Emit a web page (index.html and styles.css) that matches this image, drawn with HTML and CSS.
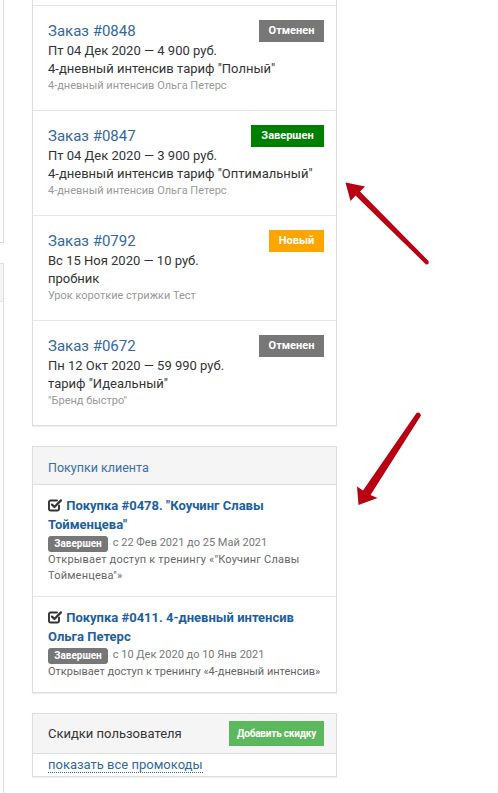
FILE: index.html
```html
<!DOCTYPE html>
<html lang="ru">
<head>
<meta charset="utf-8">
<title>Заказы клиента</title>
<link rel="stylesheet" href="styles.css">
</head>
<body>
<div class="page">
  <aside class="side">
    <div class="side-box side-box-top"></div>
    <div class="side-box side-box-bottom">
      <div class="side-head"></div>
    </div>
  </aside>

  <main class="main">
    <section class="panel orders">
      <div class="order-stub"></div>

      <div class="order">
        <div class="order-head">
          <a class="order-title">Заказ #0848</a>
          <span class="status status-cancel">Отменен</span>
        </div>
        <div class="order-line">Пт 04 Дек 2020 — 4 900 руб.</div>
        <div class="order-line">4-дневный интенсив тариф "Полный"</div>
        <div class="order-note">4-дневный интенсив Ольга Петерс</div>
      </div>

      <div class="order">
        <div class="order-head">
          <a class="order-title">Заказ #0847</a>
          <span class="status status-done">Завершен</span>
        </div>
        <div class="order-line">Пт 04 Дек 2020 — 3 900 руб.</div>
        <div class="order-line">4-дневный интенсив тариф "Оптимальный"</div>
        <div class="order-note">4-дневный интенсив Ольга Петерс</div>
      </div>

      <div class="order">
        <div class="order-head">
          <a class="order-title">Заказ #0792</a>
          <span class="status status-new">Новый</span>
        </div>
        <div class="order-line">Вс 15 Ноя 2020 — 10 руб.</div>
        <div class="order-line">пробник</div>
        <div class="order-note">Урок короткие стрижки Тест</div>
      </div>

      <div class="order order-last">
        <div class="order-head">
          <a class="order-title">Заказ #0672</a>
          <span class="status status-cancel">Отменен</span>
        </div>
        <div class="order-line">Пн 12 Окт 2020 — 59 990 руб.</div>
        <div class="order-line">тариф "Идеальный"</div>
        <div class="order-note">"Бренд быстро"</div>
      </div>
    </section>

    <section class="panel purchases">
      <div class="panel-head"><span class="panel-head-link">Покупки клиента</span></div>

      <div class="purchase">
        <div class="purchase-title">
          <svg class="check-ico" viewBox="0 0 14 14" width="14" height="14" aria-hidden="true">
            <path d="M11 7.5V11a1.5 1.5 0 0 1-1.5 1.5h-7A1.5 1.5 0 0 1 1 11V4a1.5 1.5 0 0 1 1.5-1.5H9" fill="none" stroke="#333" stroke-width="1.9" stroke-linecap="round"/>
            <path d="M4 6.6l2.4 2.4L13 2.4" fill="none" stroke="#333" stroke-width="2.2" stroke-linecap="round" stroke-linejoin="round"/>
          </svg>
          <a class="purchase-link">Покупка #0478. "Коучинг Славы<br>Тойменцева"</a>
        </div>
        <div class="purchase-meta"><span class="pill">Завершен</span> с 22 Фев 2021 до 25 Май 2021</div>
        <div class="purchase-desc">Открывает доступ к тренингу «"Коучинг Славы<br>Тойменцева"»</div>
      </div>

      <div class="purchase purchase-last">
        <div class="purchase-title">
          <svg class="check-ico" viewBox="0 0 14 14" width="14" height="14" aria-hidden="true">
            <path d="M11 7.5V11a1.5 1.5 0 0 1-1.5 1.5h-7A1.5 1.5 0 0 1 1 11V4a1.5 1.5 0 0 1 1.5-1.5H9" fill="none" stroke="#333" stroke-width="1.9" stroke-linecap="round"/>
            <path d="M4 6.6l2.4 2.4L13 2.4" fill="none" stroke="#333" stroke-width="2.2" stroke-linecap="round" stroke-linejoin="round"/>
          </svg>
          <a class="purchase-link">Покупка #0411. 4-дневный интенсив<br>Ольга Петерс</a>
        </div>
        <div class="purchase-meta"><span class="pill">Завершен</span> с 10 Дек 2020 до 10 Янв 2021</div>
        <div class="purchase-desc nowrap">Открывает доступ к тренингу «4-дневный интенсив»</div>
      </div>
    </section>

    <section class="panel discounts">
      <div class="panel-head discounts-head">
        <span class="discounts-title">Скидки пользователя</span>
        <button class="btn-add" type="button">Добавить скидку</button>
      </div>
      <div class="discounts-body">
        <a class="dotted-link">показать все промокоды</a>
      </div>
    </section>
  </main>
</div>

<svg class="arrows" width="498" height="793" viewBox="0 0 498 793" aria-hidden="true">
  <path d="M345.5,182.5 L365,186.5 L360,191.5 L428.5,261 Q429.5,264.5 426,264.5 L355.5,195.5 L350.5,201 Z" fill="#b80012"/>
  <path d="M358.5,505 L357,486.5 L363,490.5 L416.5,413 Q420,411.5 421,415.5 L370.5,495 L377.5,498 Z" fill="#b80012"/>
</svg>
</body>
</html>
```

FILE: styles.css
```css
* { box-sizing: border-box; }

html, body {
  margin: 0;
  padding: 0;
  background: #fff;
}

body {
  font-family: Roboto, "Liberation Sans", Arial, sans-serif;
  color: #333;
  width: 498px;
  height: 793px;
  overflow: hidden;
  position: relative;
}

.page {
  display: flex;
  align-items: flex-start;
}

/* clipped left column */
.side {
  width: 4px;
  flex: none;
  display: flex;
  flex-direction: column;
}

.side-box {
  border-right: 1px solid #ddd;
  background: #fff;
}

.side-box-top {
  height: 243px;
  border-bottom: 1px solid #ddd;
}

.side-box-bottom {
  margin-top: 20px;
  height: 540px;
  border-top: 1px solid #ddd;
}

.side-head {
  height: 38px;
  background: #f5f5f5;
  border-bottom: 1px solid #e6e6e6;
}

/* main column */
.main {
  margin-left: 28px;
  width: 305px;
  display: flex;
  flex-direction: column;
  gap: 20px;
}

.panel {
  border: 1px solid #ddd;
  background: #fff;
  box-shadow: 0 1px 1px rgba(0, 0, 0, 0.06);
}

.orders {
  border-top: none;
}

.order-stub {
  height: 6px;
  border-bottom: 1px solid #e5e5e5;
}

.order {
  height: 105px;
  padding: 14px 12px 0 15px;
  border-bottom: 1px solid #e5e5e5;
}

.order-last {
  border-bottom: none;
  height: 104px;
}

.order-head {
  display: flex;
  justify-content: space-between;
  align-items: flex-start;
}

.order-title {
  font-size: 15px;
  line-height: 22px;
  color: #33689e;
}

.status {
  display: inline-block;
  height: 22px;
  line-height: 22px;
  padding: 0 6px;
  font-size: 11px;
  font-weight: 700;
  color: #fff;
  text-align: center;
}

.status-cancel { background: #777; width: 65px; }
.status-done { background: #008000; width: 73px; }
.status-new { background: #ffa500; width: 55px; }

.order-line {
  font-size: 13px;
  line-height: 18px;
  color: #333;
}

.order-note {
  font-size: 11px;
  line-height: 16px;
  color: #999;
}

/* purchases */
.panel-head {
  background: #f5f5f5;
  border-bottom: 1px solid #ddd;
  padding: 10px 15px;
  height: 38px;
}

.panel-head-link {
  font-size: 12.5px;
  line-height: 17px;
  color: #3b6ea5;
}

.purchase {
  padding: 11px 8px 12px 15px;
  border-bottom: 1px solid #e5e5e5;
}

.purchase-last {
  border-bottom: none;
}

.purchase-title {
  font-size: 13px;
  line-height: 19px;
  font-weight: 700;
}

.check-ico {
  vertical-align: -2px;
  margin-right: 1px;
}

.purchase-link {
  color: #1d5f9e;
}

.purchase-meta {
  font-size: 11px;
  line-height: 18px;
  color: #777;
}

.pill {
  display: inline-block;
  background: #777;
  color: #fff;
  font-size: 10px;
  font-weight: 700;
  line-height: 16px;
  height: 16px;
  width: 60px;
  text-align: center;
  border-radius: 3px;
  vertical-align: -1px;
  margin-right: 2px;
}

.purchase-desc {
  font-size: 11px;
  letter-spacing: 0.2px;
  line-height: 16px;
  color: #666;
}

.purchase-desc.nowrap {
  white-space: nowrap;
  letter-spacing: 0;
}

/* discounts */
.discounts-head {
  display: flex;
  justify-content: space-between;
  align-items: center;
  padding: 5px 12px 5px 15px;
  height: 40px;
}

.discounts-title {
  font-size: 13px;
  color: #333;
}

.btn-add {
  background: #5cb85c;
  border: none;
  color: #fff;
  font-family: inherit;
  font-size: 10px;
  font-weight: 700;
  height: 25px;
  width: 95px;
  padding: 0;
  letter-spacing: -0.2px;
}

.discounts-body {
  padding: 0 15px;
  height: 22px;
}

.dotted-link {
  font-size: 13px;
  line-height: 20px;
  color: #33689e;
  border-bottom: 1px dotted #33689e;
}

.arrows {
  position: absolute;
  left: 0;
  top: 0;
  pointer-events: none;
}
```
